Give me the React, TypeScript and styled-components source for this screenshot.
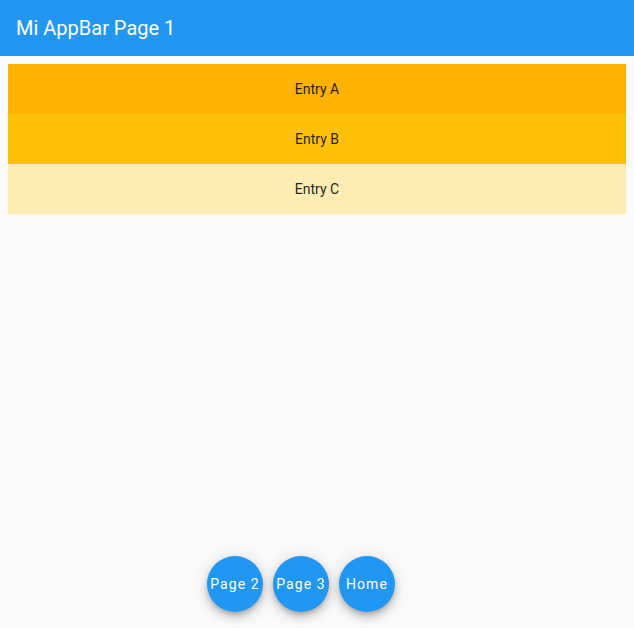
import React from "react";
import styled, { createGlobalStyle } from "styled-components";

const Global = createGlobalStyle`
  html, body { margin: 0; padding: 0; background: #fafafa; }
  body { font-family: Roboto, "Noto Sans", sans-serif; }
`;

const Page = styled.div`
  display: flex;
  flex-direction: column;
  height: 100vh;
  background: #fafafa;
`;

const AppBar = styled.header`
  height: 56px;
  flex: none;
  display: flex;
  align-items: center;
  padding: 0 16px;
  background: #2196f3;
  color: #fff;
  font-size: 20px;
  font-weight: 400;
`;

const Body = styled.main`
  flex: 1;
  padding: 8px;
  display: flex;
  flex-direction: column;
`;

const Entry = styled.div<{ $bg: string }>`
  height: 50px;
  display: flex;
  align-items: center;
  justify-content: center;
  background: ${(p) => p.$bg};
  color: rgba(0,0,0,0.87);
  font-size: 14px;
`;

const Fabs = styled.div`
  flex: none;
  display: flex;
  justify-content: center;
  gap: 10px;
  padding: 0 32px 16px 0;
`;

const Fab = styled.button`
  width: 56px;
  height: 56px;
  border-radius: 50%;
  border: none;
  padding: 0;
  background: #2196f3;
  color: #fff;
  font-family: Roboto, sans-serif;
  font-size: 14px;
  font-weight: 400;
  letter-spacing: 1.1px;
  white-space: nowrap;
  display: flex;
  align-items: center;
  justify-content: center;
  box-shadow: 0 3px 5px -1px rgba(0,0,0,0.2), 0 6px 10px 0 rgba(0,0,0,0.14), 0 1px 18px 0 rgba(0,0,0,0.12);
`;

const entries = [
  { label: "Entry A", bg: "#ffb300" },
  { label: "Entry B", bg: "#ffc107" },
  { label: "Entry C", bg: "#ffecb3" },
];

export default function App() {
  return (
    <Page>
      <Global />
      <AppBar>Mi AppBar Page 1</AppBar>
      <Body>
        {entries.map((e) => (
          <Entry key={e.label} $bg={e.bg}>{e.label}</Entry>
        ))}
      </Body>
      <Fabs>
        <Fab>Page 2</Fab>
        <Fab>Page 3</Fab>
        <Fab>Home</Fab>
      </Fabs>
    </Page>
  );
}
